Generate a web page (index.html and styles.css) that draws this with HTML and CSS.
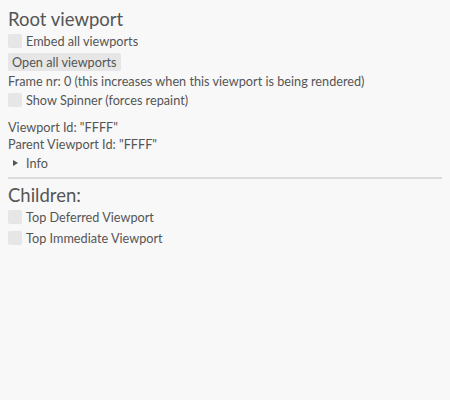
FILE: index.html
```html
<!DOCTYPE html>
<html>
<head>
<meta charset="utf-8">
<link rel="stylesheet" href="styles.css">
</head>
<body>
<div class="panel">
  <div class="heading">Root viewport</div>
  <div class="row check-row"><span class="box"></span><span>Embed all viewports</span></div>
  <div class="row btn-row"><span class="btn">Open all viewports</span></div>
  <div class="label">Frame nr: 0 (this increases when this viewport is being rendered)</div>
  <div class="row check-row"><span class="box"></span><span>Show Spinner (forces repaint)</span></div>
  <div class="label gap-top">Viewport Id: "FFFF"</div>
  <div class="label">Parent Viewport Id: "FFFF"</div>
  <div class="row collapse-row"><span class="tri"></span><span>Info</span></div>
  <div class="sep"></div>
  <div class="heading">Children:</div>
  <div class="row check-row"><span class="box"></span><span>Top Deferred Viewport</span></div>
  <div class="row check-row"><span class="box"></span><span>Top Immediate Viewport</span></div>
</div>
</body>
</html>
```
FILE: styles.css
```css
html, body {
  margin: 0;
  padding: 0;
  background: #f8f8f8;
  height: 100%;
}
body {
  font-family: "Lato", "Open Sans", sans-serif;
  font-size: 12.7px;
  color: #555555;
}
.panel {
  padding: 8px;
  display: flex;
  flex-direction: column;
  gap: 3px;
}
.heading {
  font-size: 18.5px;
  height: 22px;
  line-height: 22px;
  white-space: nowrap;
}
.row {
  height: 18px;
  display: flex;
  align-items: center;
  white-space: nowrap;
}
.heading + .row { margin-top: -1px; }
.box {
  width: 14px;
  height: 14px;
  border-radius: 2px;
  background: #e6e6e6;
  margin-right: 4px;
  flex: none;
}
.btn {
  background: #e6e6e6;
  border-radius: 2px;
  height: 18px;
  line-height: 18px;
  padding: 0 4px;
}
.label {
  height: 14px;
  line-height: 14px;
  white-space: nowrap;
}
.gap-top { margin-top: 8px; }
.tri {
  width: 0;
  height: 0;
  border-top: 3px solid transparent;
  border-bottom: 3px solid transparent;
  border-left: 5px solid #555555;
  margin-left: 5px;
  margin-right: 8px;
}
.sep {
  height: 6px;
}
.sep::after {
  content: "";
  display: block;
  margin-top: 2px;
  height: 2px;
  background: #dcdcdc;
}
```
